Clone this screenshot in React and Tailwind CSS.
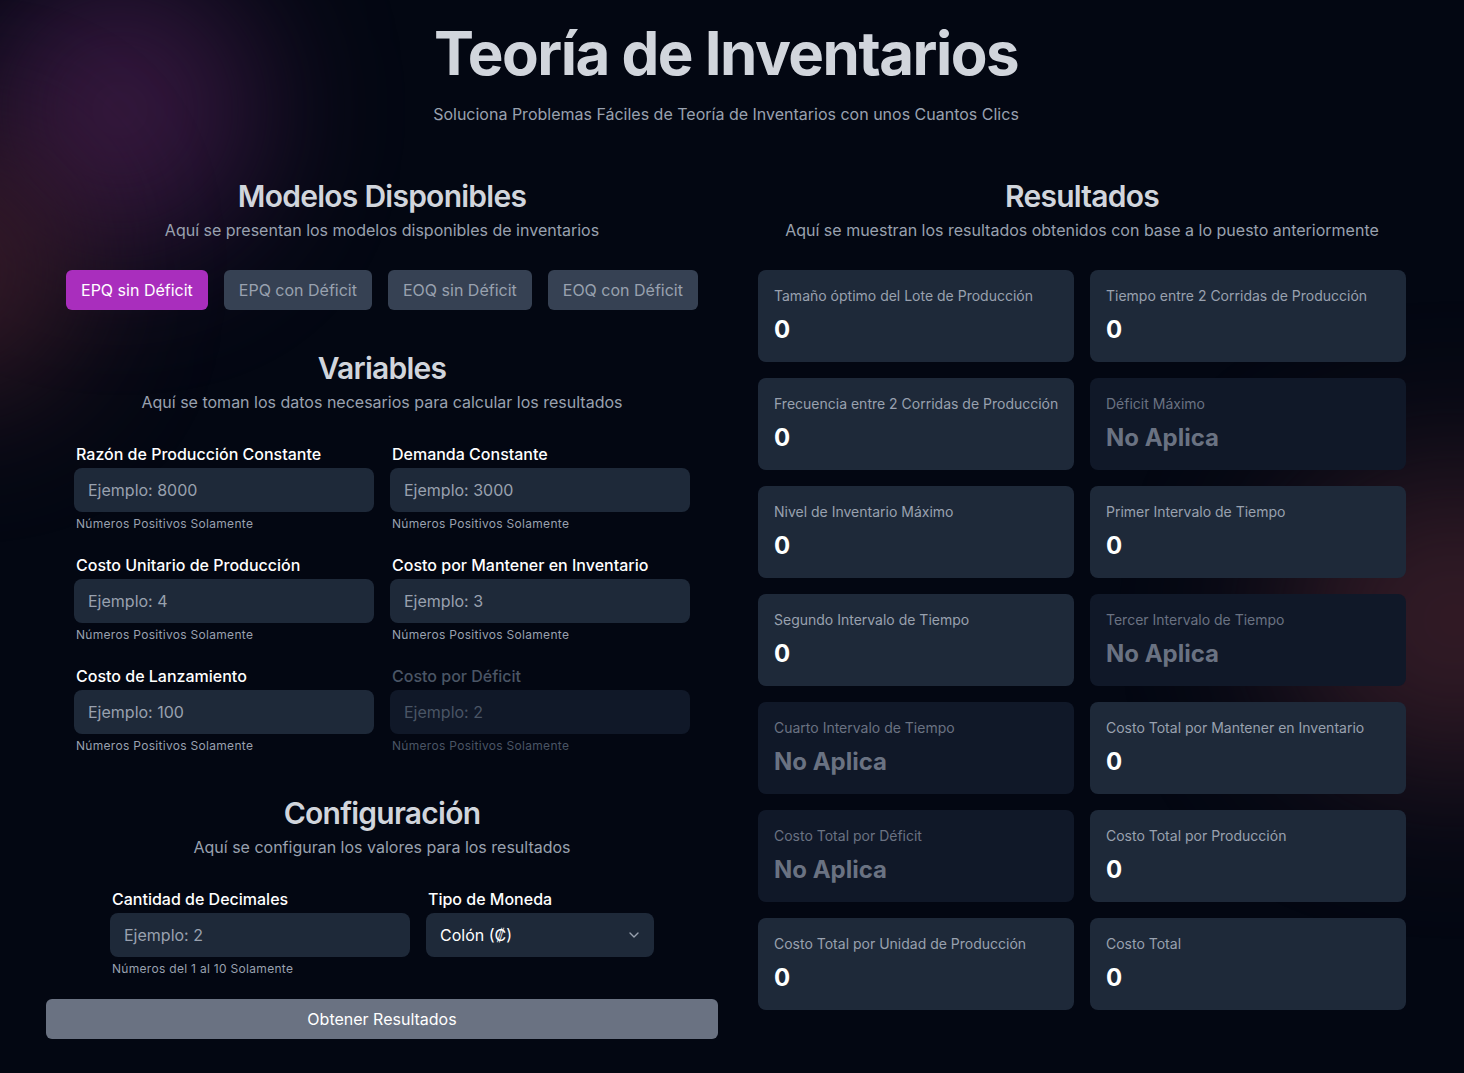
import React from "react";
import { ChevronDown } from "lucide-react";

const fields = [
  { label: "Razón de Producción Constante", ph: "Ejemplo: 8000" },
  { label: "Demanda Constante", ph: "Ejemplo: 3000" },
  { label: "Costo Unitario de Producción", ph: "Ejemplo: 4" },
  { label: "Costo por Mantener en Inventario", ph: "Ejemplo: 3" },
  { label: "Costo de Lanzamiento", ph: "Ejemplo: 100" },
  { label: "Costo por Déficit", ph: "Ejemplo: 2", disabled: true },
];

const results = [
  { label: "Tamaño óptimo del Lote de Producción" },
  { label: "Tiempo entre 2 Corridas de Producción" },
  { label: "Frecuencia entre 2 Corridas de Producción" },
  { label: "Déficit Máximo", na: true },
  { label: "Nivel de Inventario Máximo" },
  { label: "Primer Intervalo de Tiempo" },
  { label: "Segundo Intervalo de Tiempo" },
  { label: "Tercer Intervalo de Tiempo", na: true },
  { label: "Cuarto Intervalo de Tiempo", na: true },
  { label: "Costo Total por Mantener en Inventario" },
  { label: "Costo Total por Déficit", na: true },
  { label: "Costo Total por Producción" },
  { label: "Costo Total por Unidad de Producción" },
  { label: "Costo Total" },
];

const models = ["EPQ sin Déficit", "EPQ con Déficit", "EOQ sin Déficit", "EOQ con Déficit"];

function Field({ label, ph, disabled, helper = "Números Positivos Solamente", width = "w-[300px]" }) {
  return (
    <div className={`flex flex-col ${width}`}>
      <label className={`pl-0.5 text-base leading-6 font-medium ${disabled ? "text-gray-600" : "text-white"}`}>{label}</label>
      <input
        disabled={disabled}
        placeholder={ph}
        className={`mt-0.5 h-11 w-full rounded-lg px-[14px] text-base outline-none ${
          disabled ? "bg-gray-900 placeholder:text-gray-600" : "bg-gray-800 text-white placeholder:text-gray-400"
        }`}
      />
      <span className={`mt-1 pl-0.5 text-xs leading-4 tracking-wide ${disabled ? "text-gray-600" : "text-gray-400"}`}>{helper}</span>
    </div>
  );
}

function Heading({ title, sub }) {
  return (
    <div className="flex flex-col items-center">
      <h2 className="text-3xl leading-9 font-semibold tracking-tight text-gray-300">{title}</h2>
      <p className="mt-1 text-base leading-6 text-gray-400">{sub}</p>
    </div>
  );
}

export default function App() {
  return (
    <div
      className="relative min-h-screen overflow-hidden bg-[#030712]"
      style={{ fontFamily: "Inter, 'Noto Sans', sans-serif" }}
    >
      <div className="pointer-events-none absolute left-[-20px] top-[-30px] h-[280px] w-[280px] rounded-full bg-[#421c4a] opacity-80 blur-[70px]" />
      <div className="pointer-events-none absolute left-[-160px] top-[140px] h-[260px] w-[240px] rounded-full bg-[#4a2230] opacity-70 blur-[70px]" />
      <div className="pointer-events-none absolute right-[-160px] top-[470px] h-[300px] w-[340px] rounded-full bg-[#4a2530] opacity-70 blur-[80px]" />

      <div className="relative flex w-[1452px] flex-col">
        <header className="flex flex-col items-center pt-[23px]">
          <h1 className="text-6xl leading-none font-bold tracking-tight text-gray-300">Teoría de Inventarios</h1>
          <p className="mt-[19px] text-base leading-6 text-gray-400">
            Soluciona Problemas Fáciles de Teoría de Inventarios con unos Cuantos Clics
          </p>
        </header>

        <div className="mt-[52px] ml-[46px] flex gap-10">
          {/* Left column */}
          <div className="flex w-[672px] flex-col items-center">
            <Heading title="Modelos Disponibles" sub="Aquí se presentan los modelos disponibles de inventarios" />
            <div className="mt-7 flex gap-4">
              {models.map((m, i) => (
                <button
                  key={m}
                  className={`h-10 rounded-md px-[15px] text-base ${
                    i === 0 ? "bg-[#a92ebd] text-white" : "bg-gray-700 text-gray-400"
                  }`}
                >
                  {m}
                </button>
              ))}
            </div>

            <div className="mt-10">
              <Heading title="Variables" sub="Aquí se toman los datos necesarios para calcular los resultados" />
            </div>
            <div className="mt-7 grid grid-cols-2 gap-x-4 gap-y-[21px]">
              {fields.map((f) => (
                <Field key={f.label} {...f} />
              ))}
            </div>

            <div className="mt-[41px]">
              <Heading title="Configuración" sub="Aquí se configuran los valores para los resultados" />
            </div>
            <div className="mt-7 flex items-start gap-4">
              <Field label="Cantidad de Decimales" ph="Ejemplo: 2" helper="Números del 1 al 10 Solamente" />
              <div className="flex w-[228px] flex-col">
                <label className="pl-0.5 text-base leading-6 font-medium text-white">Tipo de Moneda</label>
                <div className="mt-0.5 flex h-11 items-center justify-between rounded-lg bg-gray-800 pl-[14px] pr-3 text-base text-white">
                  <span>Colón (₡)</span>
                  <ChevronDown size={16} className="text-gray-400" />
                </div>
              </div>
            </div>

            <button className="mt-[22px] h-10 w-full rounded-md bg-gray-500 text-base text-white">Obtener Resultados</button>
          </div>

          {/* Right column */}
          <div className="flex w-[648px] flex-col items-center">
            <Heading title="Resultados" sub="Aquí se muestran los resultados obtenidos con base a lo puesto anteriormente" />
            <div className="mt-7 grid w-full grid-cols-2 gap-4">
              {results.map((r) => (
                <div
                  key={r.label}
                  className={`flex h-[92px] flex-col rounded-lg p-4 ${r.na ? "bg-gray-900" : "bg-gray-800"}`}
                >
                  <span className={`whitespace-nowrap text-sm leading-5 ${r.na ? "text-gray-500" : "text-gray-400"}`}>{r.label}</span>
                  <span className={`mt-2 text-2xl leading-8 font-bold ${r.na ? "text-gray-500" : "text-white"}`}>
                    {r.na ? "No Aplica" : "0"}
                  </span>
                </div>
              ))}
            </div>
          </div>
        </div>
      </div>
    </div>
  );
}
